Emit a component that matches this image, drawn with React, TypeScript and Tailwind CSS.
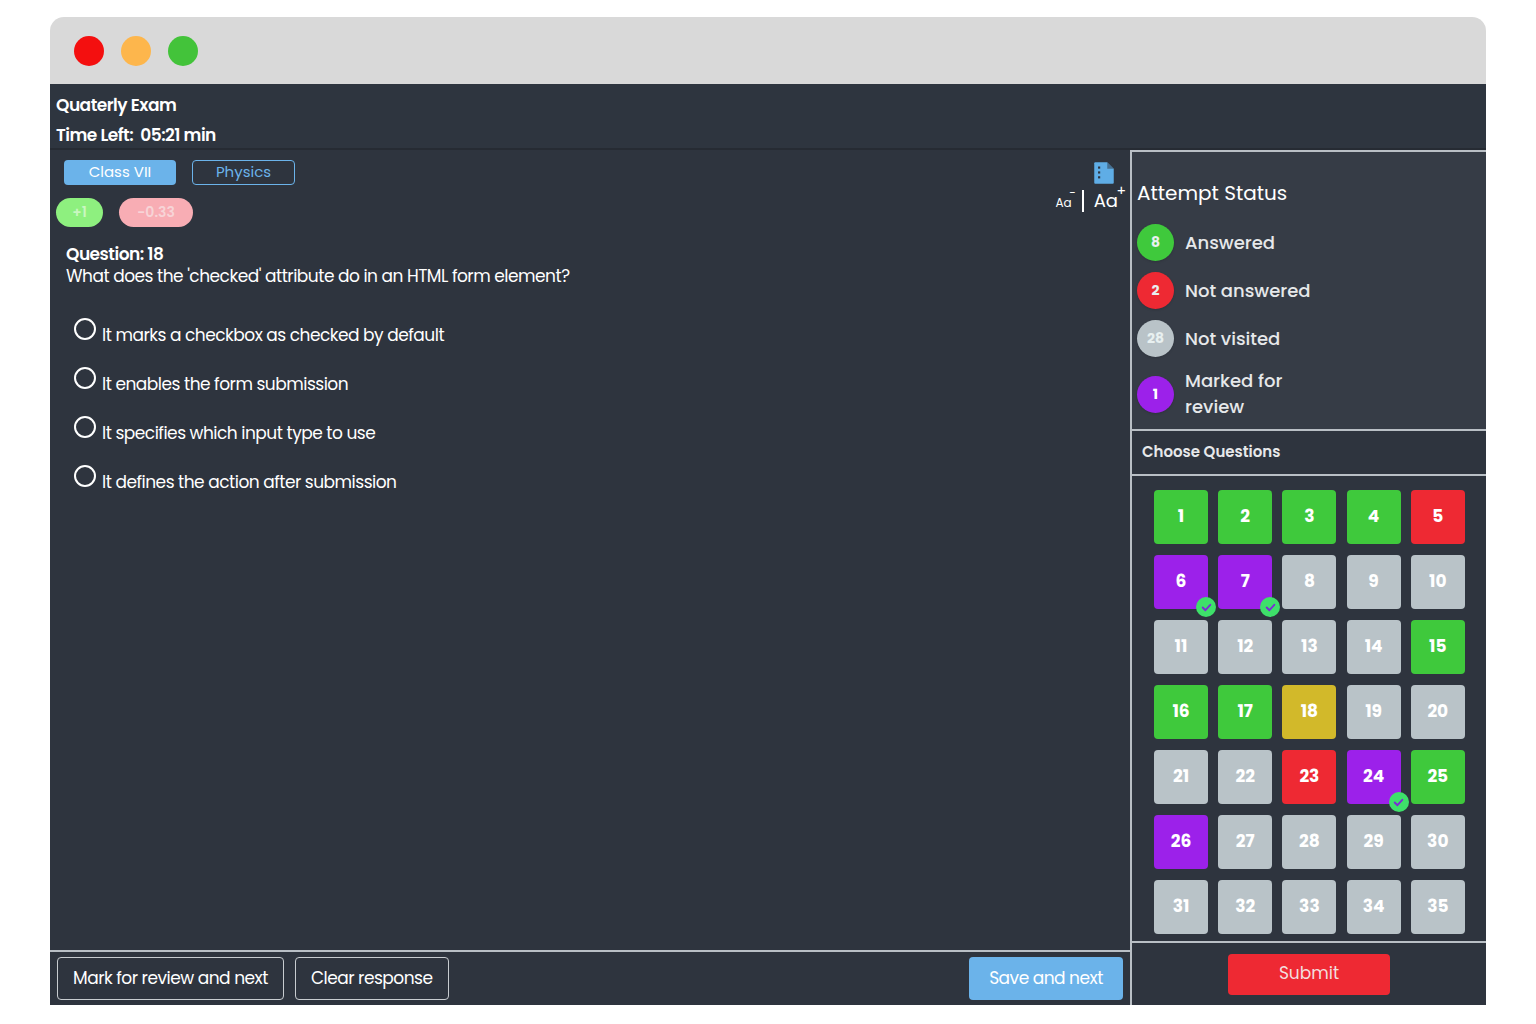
import React from "react";

const colors: Record<string, string> = {
  g: "bg-[#3fc93c]",
  r: "bg-[#ee2933]",
  p: "bg-[#9c21ea]",
  n: "bg-[#b9c3c8]",
  y: "bg-[#d2b92a]",
};
const states = "ggggr ppnnn nnnng ggynn nnrpg pnnnn nnnnn".replace(/ /g, "").split("");
const checked = new Set([6, 7, 24]);

function Check() {
  return (
    <div className="absolute right-[-8px] bottom-[-8px] w-[20px] h-[20px] rounded-full bg-[#3ee06a] flex items-center justify-center">
      <svg width="13" height="13" viewBox="0 0 24 24" fill="none" stroke="#7b2bd6" strokeWidth="3.5" strokeLinecap="round" strokeLinejoin="round">
        <path d="M5 12l5 5 9-10" />
      </svg>
    </div>
  );
}

export default function App() {
  const font = { fontFamily: "Poppins, Inter, 'Noto Sans', sans-serif" };
  return (
    <div className="w-[1536px] h-[1024px] bg-white pt-[17px] px-[50px]" style={font}>
      <div className="w-[1436px] flex flex-col">
        <div className="h-[67px] bg-[#d9d9d9] rounded-t-[14px] flex items-center gap-[17px] pl-[24px]">
          <div className="w-[30px] h-[30px] rounded-full bg-[#f40f0f]" />
          <div className="w-[30px] h-[30px] rounded-full bg-[#fdb64c]" />
          <div className="w-[30px] h-[30px] rounded-full bg-[#43c33a]" />
        </div>
        <div className="h-[66px] bg-[#2e353f] border-b-2 border-[#262b33] px-[6px] pt-[6px] text-white font-semibold text-[17px] tracking-[-0.5px] leading-[30px]">
          <div>Quaterly Exam</div>
          <div>Time Left:&nbsp; 05:21 min</div>
        </div>
        <div className="flex h-[855px] bg-[#2e343e]">
          <div className="w-[1080px] flex flex-col">
            <div className="flex-1 relative px-[14px] pt-[10px]">
              <div className="flex gap-[16px]">
                <div className="w-[112px] h-[25px] rounded bg-[#6bb3ea] text-white text-[15px] flex items-center justify-center">Class VII</div>
                <div className="w-[103px] h-[25px] rounded border border-[#6bb3ea] text-[#6bb3ea] text-[15px] flex items-center justify-center">Physics</div>
              </div>
              <div className="flex gap-[16px] mt-[13px] -ml-[8px]">
                <div className="w-[47px] h-[29px] rounded-full bg-[#8ef07f] text-[#c9f7c0] text-[14px] font-semibold flex items-center justify-center">+1</div>
                <div className="w-[74px] h-[29px] rounded-full bg-[#f8adb4] text-[#f7d4d7] text-[14px] font-semibold flex items-center justify-center">-0.33</div>
              </div>
              <div className="mt-[16px] ml-[2px] text-white text-[17px] tracking-[-0.5px]">
                <div className="font-semibold leading-[22px]">Question: 18</div>
                <div className="leading-[22px]">What does the 'checked' attribute do in an HTML form element?</div>
              </div>
              <div className="mt-[36px] ml-[10px] flex flex-col gap-[25px] text-white text-[17px] tracking-[-0.5px]">
                {["It marks a checkbox as checked by default", "It enables the form submission", "It specifies which input type to use", "It defines the action after submission"].map((t) => (
                  <div key={t} className="flex items-start gap-[6px] h-[24px]">
                    <div className="w-[22px] h-[22px] rounded-full border-2 border-white mt-[-5px]" />
                    <span>{t}</span>
                  </div>
                ))}
              </div>
              <div className="absolute right-[12px] top-[10px] flex flex-col items-end">
                <svg width="26" height="26" viewBox="0 0 24 24" className="mr-[1px]">
                  <path d="M4 2h11l6 6v13a1 1 0 0 1-1 1H4a1 1 0 0 1-1-1V3a1 1 0 0 1 1-1z" fill="#5fade6" />
                  <path d="M15 2v6h6" fill="#2e343e" opacity="0.5" />
                  <rect x="6.5" y="6" width="2" height="2" fill="#2e343e" />
                  <rect x="6.5" y="10.5" width="2" height="2" fill="#2e343e" />
                  <rect x="6.5" y="15" width="2" height="2" fill="#2e343e" />
                </svg>
                <div className="flex items-end mt-[4px] text-white">
                  <span className="relative text-[12px]">Aa<span className="absolute -top-[10px] right-[-4px] text-[12px]">−</span></span>
                  <span className="mx-[10px] w-[2px] h-[22px] bg-white" />
                  <span className="relative text-[18px] leading-[22px]">Aa<span className="absolute -top-[10px] right-[-8px] text-[14px]">+</span></span>
                </div>
              </div>
            </div>
            <div className="h-[55px] border-t-2 border-[#b9bfc5] flex items-center px-[7px] gap-[11px]">
              <button className="h-[43px] px-[15px] rounded border border-[#c8ccd0] text-white text-[17px] tracking-[-0.5px]">Mark for review and next</button>
              <button className="h-[43px] px-[15px] rounded border border-[#c8ccd0] text-white text-[17px] tracking-[-0.5px]">Clear response</button>
              <button className="ml-auto h-[43px] w-[154px] rounded bg-[#6bb3ea] text-white text-[17px] tracking-[-0.5px]">Save and next</button>
            </div>
          </div>
          <div className="w-[356px] border-l-2 border-t-2 border-[#b9bfc5] flex flex-col">
            <div className="h-[277px] bg-[#363c46] px-[5px] pt-[26px]">
              <div className="text-white text-[20px] mb-[10px]">Attempt Status</div>
              {[
                ["8", "bg-[#3fc93c]", "Answered"],
                ["2", "bg-[#ee2933]", "Not answered"],
                ["28", "bg-[#b9c3c8]", "Not visited"],
              ].map(([n, c, l]) => (
                <div key={l} className="flex items-center gap-[11px] h-[48px]">
                  <div className={`w-[37px] h-[37px] rounded-full ${c} text-[#e8f0f0] text-[14px] font-bold flex items-center justify-center shadow`}>{n}</div>
                  <span className="text-[#e6e8ea] text-[18px] font-medium">{l}</span>
                </div>
              ))}
              <div className="flex items-center gap-[11px] mt-[6px]">
                <div className="w-[37px] h-[37px] rounded-full bg-[#9c21ea] text-white text-[14px] font-bold flex items-center justify-center shadow">1</div>
                <span className="text-[#e6e8ea] text-[18px] font-medium leading-[26px]">Marked for<br />review</span>
              </div>
            </div>
            <div className="h-[47px] border-t-2 border-b-2 border-[#b9bfc5] flex items-center px-[10px] text-[#e6e8ea] text-[15px] font-semibold">Choose Questions</div>
            <div className="flex-1 px-[22px] pt-[14px] grid grid-cols-5 gap-x-[11px] gap-y-[11px] content-start">
              {states.map((s, i) => (
                <div key={i} className={`relative w-[54px] h-[54px] rounded ${colors[s]} text-white font-bold text-[17px] flex items-center justify-center`}>
                  {i + 1}
                  {checked.has(i + 1) && <Check />}
                </div>
              ))}
            </div>
            <div className="h-[64px] border-t-2 border-[#b9bfc5] flex items-center justify-center">
              <button className="w-[162px] h-[41px] rounded bg-[#ee2933] text-[#f3dede] text-[17px]">Submit</button>
            </div>
          </div>
        </div>
      </div>
    </div>
  );
}
